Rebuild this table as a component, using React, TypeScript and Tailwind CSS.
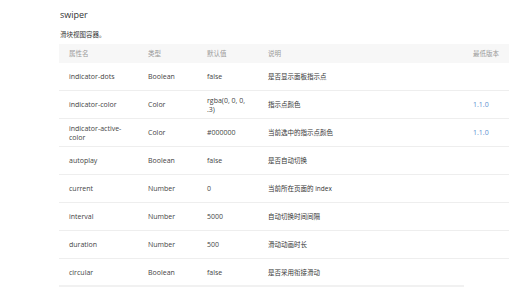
const rows = [
  { name: "indicator-dots", type: "Boolean", def: "false", desc: "是否显示面板指示点", ver: "" },
  { name: "indicator-color", type: "Color", def: "rgba(0, 0, 0, .3)", desc: "指示点颜色", ver: "1.1.0" },
  { name: "indicator-active-color", type: "Color", def: "#000000", desc: "当前选中的指示点颜色", ver: "1.1.0" },
  { name: "autoplay", type: "Boolean", def: "false", desc: "是否自动切换", ver: "" },
  { name: "current", type: "Number", def: "0", desc: "当前所在页面的 index", ver: "" },
  { name: "interval", type: "Number", def: "5000", desc: "自动切换时间间隔", ver: "" },
  { name: "duration", type: "Number", def: "500", desc: "滑动动画时长", ver: "" },
  { name: "circular", type: "Boolean", def: "false", desc: "是否采用衔接滑动", ver: "" },
];

const cols = "grid grid-cols-[79px_59px_61px_205px_46px]";

export default function App() {
  return (
    <div
      className="w-[520px] h-[293px] overflow-hidden bg-white text-[#333]"
      style={{ fontFamily: '"Open Sans", "Noto Sans CJK SC", sans-serif' }}
    >
      <div className="pl-[59px] pt-[8px] w-[509px]">
        <h2 className="pl-px text-[9px] leading-[13px] text-[#333]">swiper</h2>
        <p className="pl-px mt-[9px] text-[6.5px] leading-[9px] text-[#333]">滑块视图容器。</p>

        <div className="mt-[5px] text-[7px] leading-[9px] text-[#444]">
          <div className={`${cols} h-[19px] items-center bg-[#f7f7f7] text-[#999] text-[6.5px]`}>
            <div className="pl-[10px]">属性名</div>
            <div className="pl-[10px]">类型</div>
            <div className="pl-[10px]">默认值</div>
            <div className="pl-[10px]">说明</div>
            <div className="pl-[10px]">最低版本</div>
          </div>
          {rows.map((r, i) => (
            <div
              key={r.name}
              className={`${cols} h-[28px] items-center border-b ${i === rows.length - 1 ? "border-transparent" : "border-[#eeeeee]"}`}
            >
              <div className="pl-[10px] pr-[12px]">{r.name}</div>
              <div className="pl-[10px]">{r.type}</div>
              <div className="pl-[10px] pr-[8px]">{r.def}</div>
              <div className="pl-[10px] text-[6.5px] text-[#333]">{r.desc}</div>
              <div className="pl-[10px] text-[#5b8fd0]">{r.ver}</div>
            </div>
          ))}
          <div className="h-[2px] w-[405px] bg-[#f1f1f1] -mt-[2px]" />
        </div>
      </div>
    </div>
  );
}
